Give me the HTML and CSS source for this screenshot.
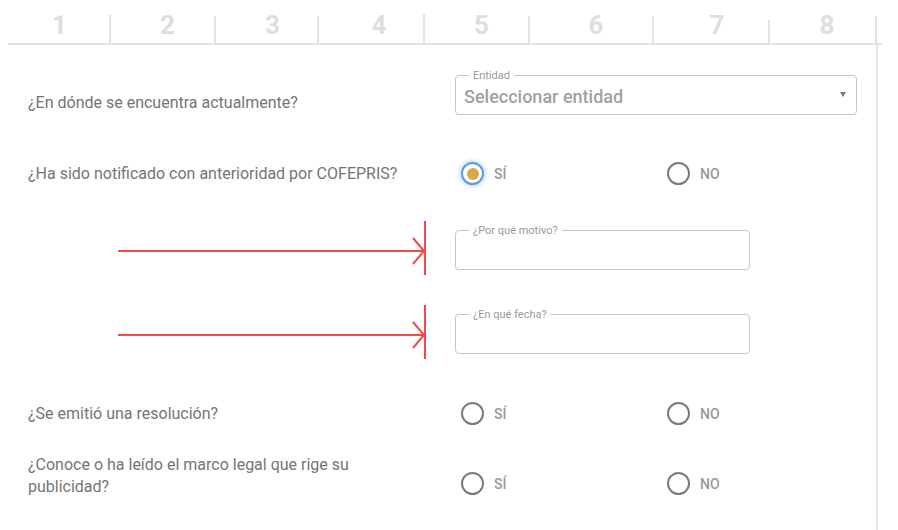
FILE: index.html
```html
<!DOCTYPE html>
<html lang="es">
<head>
<meta charset="utf-8">
<title>Formulario</title>
<link rel="stylesheet" href="styles.css">
</head>
<body>
<div class="page">
  <div class="ruler">
    <div class="cell c1"><span>1</span></div>
    <div class="cell c2"><span>2</span></div>
    <div class="cell c3"><span>3</span></div>
    <div class="cell c4"><span>4</span></div>
    <div class="cell c5"><span>5</span></div>
    <div class="cell c6"><span>6</span></div>
    <div class="cell c7"><span>7</span></div>
    <div class="cell c8"><span>8</span></div>
  </div>
  <div class="form">
    <div class="row row-select">
      <div class="question">¿En dónde se encuentra actualmente?</div>
      <fieldset class="field field-select">
        <legend>Entidad</legend>
        <span class="select-value">Seleccionar entidad</span>
        <span class="caret"></span>
      </fieldset>
    </div>

    <div class="row row-radio r2">
      <div class="question">¿Ha sido notificado con anterioridad por COFEPRIS?</div>
      <div class="radios">
        <label class="option"><span class="radio checked"></span><span class="opt-label">SÍ</span></label>
        <label class="option"><span class="radio"></span><span class="opt-label">NO</span></label>
      </div>
    </div>

    <div class="row row-arrow r3">
      <div class="arrow-cell">
        <svg class="arrow" width="320" height="54" viewBox="0 0 320 54">
          <line x1="0" y1="30" x2="306" y2="30" />
          <polyline points="295,17 306,30 295,43" />
          <line x1="307" y1="0" x2="307" y2="54" />
        </svg>
      </div>
      <fieldset class="field field-input">
        <legend>¿Por qué motivo?</legend>
      </fieldset>
    </div>

    <div class="row row-arrow r4">
      <div class="arrow-cell">
        <svg class="arrow" width="320" height="54" viewBox="0 0 320 54">
          <line x1="0" y1="30" x2="306" y2="30" />
          <polyline points="295,17 306,30 295,43" />
          <line x1="307" y1="0" x2="307" y2="54" />
        </svg>
      </div>
      <fieldset class="field field-input">
        <legend>¿En qué fecha?</legend>
      </fieldset>
    </div>

    <div class="row row-radio r5">
      <div class="question">¿Se emitió una resolución?</div>
      <div class="radios">
        <label class="option"><span class="radio"></span><span class="opt-label">SÍ</span></label>
        <label class="option"><span class="radio"></span><span class="opt-label">NO</span></label>
      </div>
    </div>

    <div class="row row-radio row-end r6">
      <div class="question narrow">¿Conoce o ha leído el marco legal que rige su publicidad?</div>
      <div class="radios">
        <label class="option"><span class="radio"></span><span class="opt-label">SÍ</span></label>
        <label class="option"><span class="radio"></span><span class="opt-label">NO</span></label>
      </div>
    </div>
  </div>
</div>
</body>
</html>
```

FILE: styles.css
```css
* { box-sizing: border-box; }

html, body {
  margin: 0;
  padding: 0;
  background: #ffffff;
  font-family: Roboto, "Liberation Sans", sans-serif;
  height: 100%;
  overflow: hidden;
}

.page {
  width: 898px;
  height: 530px;
}

/* ---------- ruler ---------- */
.ruler {
  display: flex;
  margin-left: 8px;
  width: 874px;
  height: 45px;
  border-bottom: 2px solid #e3e3e3;
}

.cell {
  display: flex;
  align-items: flex-start;
  justify-content: center;
  padding-top: 10px;
  padding-left: 8px;
  position: relative;
  font-size: 26px;
  font-weight: 700;
  color: #dedede;
  line-height: 30px;
}

.cell::after {
  content: "";
  position: absolute;
  right: 0;
  bottom: 0;
  top: 16px;
  width: 2px;
  background: #e3e3e3;
}

.c1 { width: 103px; padding-left: 0; }
.c2 { width: 105px; }
.c3 { width: 103px; padding-left: 10px; }
.c4 { width: 106px; padding-left: 14px; }
.c5 { width: 105px; }
.c6 { width: 124px; }
.c7 { width: 116px; padding-left: 10px; }
.c8 { width: 106px; }
.c1::after { top: 15px; }
.c4::after { top: 14px; }
.c7::after { top: 20px; }
.c8::after { right: -1px; }

/* ---------- form ---------- */
.form {
  width: 878px;
  height: 485px;
  border-right: 2px solid #e3e3e3;
  padding-top: 25px;
}

.row {
  display: grid;
  grid-template-columns: 455px 1fr;
}

.question {
  padding-left: 28px;
  font-size: 16px;
  line-height: 22px;
  color: #757575;
}

.question.narrow { max-width: 385px; }

.row-select { align-items: end; }

.row-radio { align-items: center; }
.row-end { align-items: end; }

.r2 { margin-top: 48px; }
.r3 { margin-top: 36px; }
.r4 { margin-top: 30px; }
.r5 { margin-top: 43px; }
.r6 { margin-top: 29px; }

/* ---------- outlined fields ---------- */
.field {
  margin: 0;
  border: 1px solid #c6c6c6;
  border-radius: 4px;
  padding: 0 8px;
  position: relative;
}

.field legend {
  margin-left: 5px;
  padding: 0 4px;
  font-size: 11px;
  line-height: 11px;
  color: #9a9a9a;
}

.field-select {
  width: 402px;
  height: 45px;
  margin-bottom: -1px;
}

.select-value {
  display: block;
  margin-top: 4px;
  font-size: 18px;
  font-weight: 500;
  color: #a1a1a1;
  line-height: 24px;
}

.caret {
  position: absolute;
  right: 10px;
  top: 11px;
  width: 0;
  height: 0;
  border-left: 3.5px solid transparent;
  border-right: 3.5px solid transparent;
  border-top: 5px solid #777;
}

.field-input {
  width: 295px;
  height: 45px;
  margin-top: 4px;
}

/* ---------- arrows ---------- */
.arrow-cell {
  padding-left: 118px;
  height: 54px;
}

.arrow {
  display: block;
  stroke: #f24a4a;
  stroke-width: 2;
  fill: none;
}

/* ---------- radios ---------- */
.radios {
  display: flex;
  padding-left: 6px;
}

.row-end .radios { margin-bottom: 3px; }

.option {
  display: flex;
  align-items: center;
  gap: 10px;
}

.option:first-child { width: 206px; }

.radio {
  width: 23px;
  height: 23px;
  border: 2px solid #7a7a7a;
  border-radius: 50%;
  display: flex;
  align-items: center;
  justify-content: center;
}

.radio.checked {
  border-color: #5f9ad6;
  box-shadow: 0 0 4px 1px rgba(90, 150, 230, 0.45);
}

.radio.checked::after {
  content: "";
  width: 12px;
  height: 12px;
  border-radius: 50%;
  background: #d4a94a;
}

.opt-label {
  font-size: 14px;
  font-weight: 500;
  color: #9a9a9a;
  line-height: 20px;
}
```
